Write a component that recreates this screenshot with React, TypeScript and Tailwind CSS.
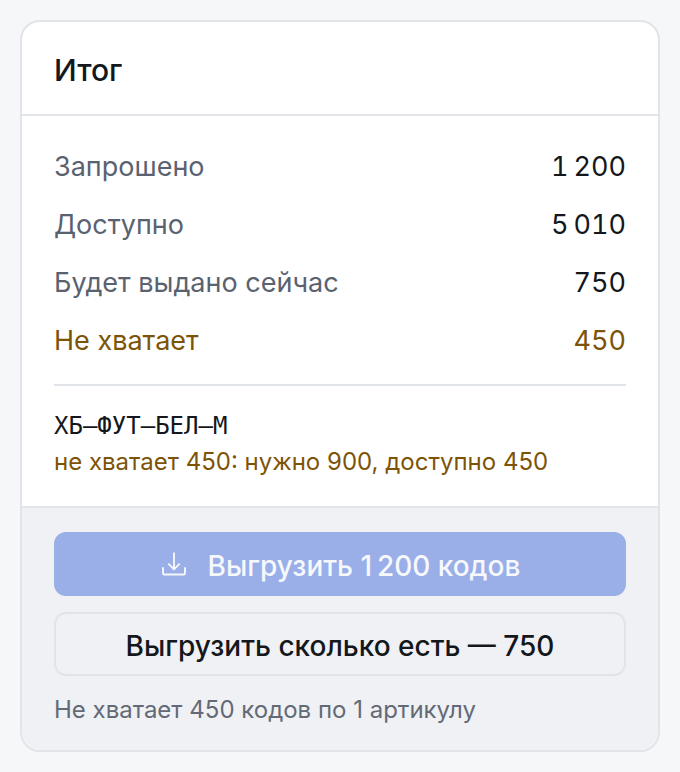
type Total = { label: string; value: string; warning?: boolean };

const TOTALS: Total[] = [
  { label: "Запрошено", value: "1\u2009200" },
  { label: "Доступно", value: "5\u2009010" },
  { label: "Будет выдано сейчас", value: "750" },
  { label: "Не хватает", value: "450", warning: true },
];

function DownloadIcon() {
  return (
    <svg
      className="size-7"
      viewBox="0 0 28 28"
      fill="none"
      stroke="currentColor"
      strokeWidth="1.9"
      strokeLinecap="round"
      strokeLinejoin="round"
      aria-hidden="true"
    >
      <path d="M14 1.3v16M8.8 12.2l5.2 5.2 5.2-5.2" />
      <path d="M3 16v5.2c0 .8.6 1.3 1.3 1.3h19.4c.7 0 1.3-.5 1.3-1.3V16" />
    </svg>
  );
}

function SummaryRow({ label, value, warning }: Total) {
  return (
    <div className={warning ? "flex justify-between text-[#7d5407]" : "flex justify-between"}>
      <dt className={warning ? "" : "text-[#5a6270]"}>{label}</dt>
      <dd className="tabular-nums">{value}</dd>
    </div>
  );
}

export default function App() {
  return (
    <main className="min-h-screen bg-[#f6f7f9] p-5 font-['Inter','Liberation_Sans',sans-serif] text-[#14171b]">
      <section className="overflow-hidden rounded-[20px] border-2 border-[#e1e4e9] bg-white">
        <header className="border-b-2 border-[#e1e4e9] px-8 pt-[30px] pb-[26px]">
          <h2 className="text-[30px] leading-9 font-medium">Итог</h2>
        </header>

        <div className="px-8 pt-[30px] pb-[26px]">
          <dl className="flex flex-col gap-4 text-[27px] leading-[42px]">
            {TOTALS.map((row) => (
              <SummaryRow key={row.label} {...row} />
            ))}
          </dl>
          <div className="mt-[22px] border-t-2 border-[#e1e4e9] pt-[22px] text-2xl leading-9">
            <p className="font-['DejaVu_Sans_Mono',monospace]">ХБ–ФУТ–БЕЛ–М</p>
            <p className="text-[#7d5407]">не хватает 450: нужно 900, доступно 450</p>
          </div>
        </div>

        <footer className="flex flex-col gap-4 border-t-2 border-[#e1e4e9] bg-[#f0f1f5] px-8 pt-6 pb-[22px]">
          <button
            type="button"
            disabled
            className="flex h-16 items-center justify-center gap-5 rounded-xl bg-[#9aaee8] pt-1 text-[28px] font-medium text-[#f6f8fc]"
          >
            <DownloadIcon />
            Выгрузить 1&thinsp;200 кодов
          </button>
          <button
            type="button"
            className="h-16 rounded-xl border-2 border-[#e1e3e7] pt-1 text-[28px] font-medium"
          >
            Выгрузить сколько есть — 750
          </button>
          <p className="text-2xl leading-9 text-[#636a75]">Не хватает 450 кодов по 1 артикулу</p>
        </footer>
      </section>
    </main>
  );
}
